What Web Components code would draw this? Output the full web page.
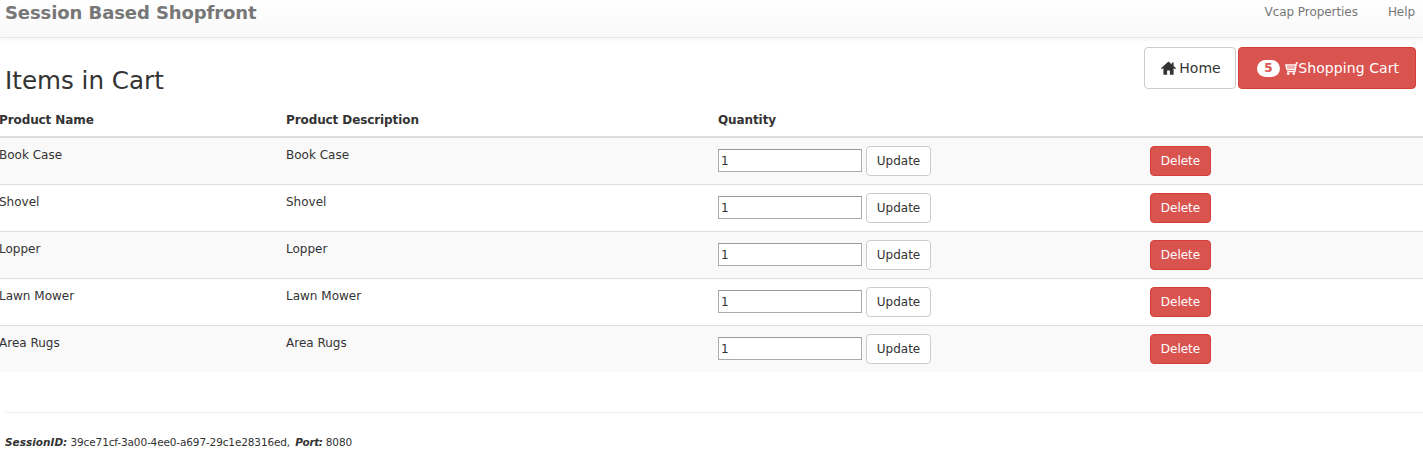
<!DOCTYPE html>
<html>
<head>
<meta charset="utf-8">
<title>Session Based Shopfront</title>
<style>
  html, body { margin: 0; padding: 0; background: #fff; overflow: hidden; }
  body { font-family: "DejaVu Sans", Verdana, sans-serif; font-size: 12px; color: #333; }
</style>
</head>
<body>
<shop-navbar></shop-navbar>
<cart-header></cart-header>
<cart-table>
  <cart-row name="Book Case"></cart-row>
  <cart-row name="Shovel"></cart-row>
  <cart-row name="Lopper"></cart-row>
  <cart-row name="Lawn Mower"></cart-row>
  <cart-row name="Area Rugs"></cart-row>
</cart-table>
<shop-footer></shop-footer>

<script>
class ShopNavbar extends HTMLElement {
  constructor() {
    super();
    this.attachShadow({ mode: 'open' });
    this.shadowRoot.innerHTML = `
      <style>
        :host {
          display: flex;
          justify-content: space-between;
          height: 37px;
          background: linear-gradient(to bottom, #fff 0%, #f8f8f8 100%);
          border-bottom: 1px solid #e7e7e7;
          box-shadow: 0 1px 4px rgba(0,0,0,.06);
        }
        .brand { font-size: 18px; font-weight: bold; color: #777; padding-left: 5px; line-height: 25px; letter-spacing: -0.09px; }
        ul { list-style: none; display: flex; gap: 30px; margin: 0; padding: 0 8px 0 0; }
        li { font-size: 12px; color: #777; line-height: 24px; letter-spacing: -0.06px; }
      </style>
      <div class="brand">Session Based Shopfront</div>
      <ul><li>Vcap Properties</li><li>Help</li></ul>
    `;
  }
}

class ShopButton extends HTMLElement {
  constructor() {
    super();
    this.attachShadow({ mode: 'open' });
    this.shadowRoot.innerHTML = `
      <style>
        :host {
          display: inline-flex;
          align-items: center;
          justify-content: center;
          box-sizing: border-box;
          border: 1px solid #ccc;
          border-radius: 4px;
          background: #fff;
          color: #333;
          font-size: 12px;
        }
        :host([danger]) { background: #d9534f; border-color: #d43f3a; color: #fff; }
        :host([large]) { font-size: 14px; height: 42px; padding-left: 2px; }
      </style>
      <slot></slot>
    `;
  }
}

class CartHeader extends HTMLElement {
  constructor() {
    super();
    this.attachShadow({ mode: 'open' });
    this.shadowRoot.innerHTML = `
      <style>
        :host { display: flex; justify-content: space-between; height: 65px; padding: 0 0 0 5px; }
        h2 { margin: 0; padding-top: 28px; font-size: 24.6px; font-weight: normal; line-height: 30px; color: #333; }
        .btns { display: flex; gap: 2px; padding: 9px 7px 0 0; align-items: flex-start; }
        .home { width: 92px; }
        .cart { width: 178px; letter-spacing: 0.08px; }
        .badge {
          display: inline-block;
          background: #fff;
          color: #d9534f;
          font-size: 12px;
          font-weight: bold;
          line-height: 17px;
          height: 17px;
          padding: 0 7.5px;
          border-radius: 10px;
          margin-right: 5px;
        }
      </style>
      <h2>Items in Cart</h2>
      <div class="btns">
        <shop-button large class="home">
          <svg width="15" height="14" viewBox="0 0 15 14" style="margin-right:3px"><path fill="#333" d="M7.5 .4 L0 7.2 L1 8.3 L2.4 7.1 V13.8 H6.1 V9.4 H8.9 V13.8 H12.6 V7.1 L14 8.3 L15 7.2 L12.6 5 V1.6 H10.8 V3.4 Z"/></svg>Home
        </shop-button>
        <shop-button large danger class="cart">
          <span class="badge">5</span>
          <svg width="13" height="13" viewBox="0 0 13 13"><path fill="none" stroke="#fff" stroke-width="1.3" d="M13 .7 L11.4 1.1 L9.9 9.6 H2.2"/><path fill="none" stroke="#fff" stroke-width="1.4" d="M.2 2.9 H11 M.9 3 L2 7.6 H10.3"/><path fill="#fff" opacity=".55" d="M1.5 3.4 H10.5 L9.8 7.2 H2.4 Z"/><circle fill="#fff" cx="3.2" cy="11.6" r="1.3"/><circle fill="#fff" cx="8.8" cy="11.6" r="1.3"/></svg>Shopping Cart
        </shop-button>
      </div>
    `;
  }
}

class CartTable extends HTMLElement {
  constructor() {
    super();
    this.attachShadow({ mode: 'open' });
    this.shadowRoot.innerHTML = `
      <style>
        :host { display: block; margin-left: -8px; }
        .head {
          display: grid;
          grid-template-columns: 286px 432px 432px 1fr;
          height: 33px;
          border-bottom: 2px solid #ddd;
          font-weight: bold;
          color: #333;
          line-height: 34px;
          letter-spacing: -0.1px;
        }
        .head div { padding-left: 8px; }
        .head div:first-child { padding-left: 7px; }
        ::slotted(cart-row:nth-child(odd)) { background: #f9f9f9; }
      </style>
      <div class="head">
        <div>Product Name</div>
        <div>Product Description</div>
        <div>Quantity</div>
        <div></div>
      </div>
      <slot></slot>
    `;
  }
}

class CartRow extends HTMLElement {
  constructor() {
    super();
    this.attachShadow({ mode: 'open' });
    let name = this.getAttribute('name');
    this.shadowRoot.innerHTML = `
      <style>
        :host {
          display: grid;
          grid-template-columns: 286px 432px 432px 1fr;
          box-sizing: border-box;
          height: 47px;
          border-bottom: 1px solid #ddd;
          color: #333;
        }
        :host(:last-child) { border-bottom: 0; height: 46px; }
        .cell { padding: 9px 0 0 8px; line-height: 17px; }
        .cell.first { padding-left: 7px; }
        .cell.ctl { padding-top: 8px; }
        .qty { display: flex; gap: 4px; align-items: flex-start; }
        input {
          box-sizing: border-box;
          width: 144px;
          height: 23px;
          margin: 3px 0 0;
          padding: 1px 2px;
          border: 1px solid #aaa;
          border-top-color: #999;
          font: 12px "DejaVu Sans", sans-serif;
          color: #333;
          background: #fff;
        }
        .update { width: 65px; height: 30px; }
        .delete { width: 61px; height: 30px; }
      </style>
      <div class="cell first">${name}</div>
      <div class="cell">${name}</div>
      <div class="cell ctl qty"><input value="1"><shop-button class="update">Update</shop-button></div>
      <div class="cell ctl"><shop-button danger class="delete">Delete</shop-button></div>
    `;
  }
}

class ShopFooter extends HTMLElement {
  constructor() {
    super();
    this.attachShadow({ mode: 'open' });
    this.shadowRoot.innerHTML = `
      <style>
        :host { display: block; margin: 40px 0 0 5px; border-top: 1px solid #eee; padding-top: 21px; font-size: 10.5px; color: #333; line-height: 17px; letter-spacing: -0.13px; }
        b { letter-spacing: 0; }
        .port { margin-left: 2px; letter-spacing: -0.4px; }
      </style>
      <b><i>SessionID:</i></b> 39ce71cf-3a00-4ee0-a697-29c1e28316ed, <b class="port"><i>Port:</i></b> 8080
    `;
  }
}

customElements.define('shop-navbar', ShopNavbar);
customElements.define('shop-button', ShopButton);
customElements.define('cart-header', CartHeader);
customElements.define('cart-table', CartTable);
customElements.define('cart-row', CartRow);
customElements.define('shop-footer', ShopFooter);
</script>
</body>
</html>
